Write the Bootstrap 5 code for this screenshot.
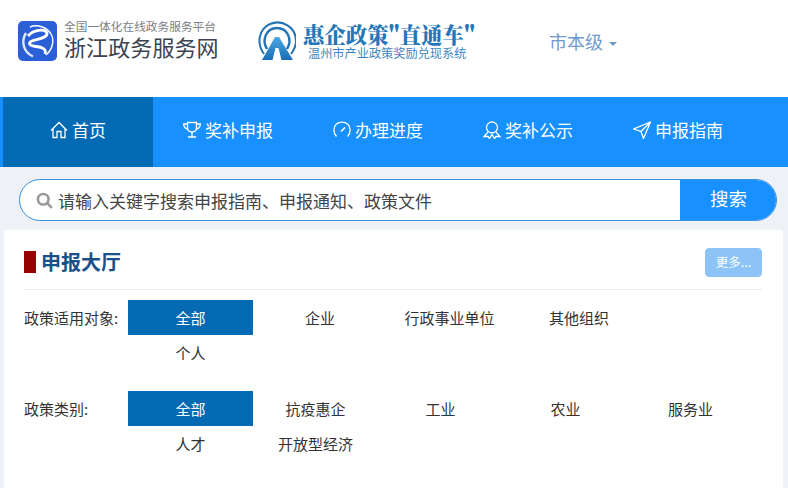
<!DOCTYPE html>
<html lang="zh-CN">
<head>
<meta charset="utf-8">
<title>浙江政务服务网</title>
<link href="https://cdn.jsdelivr.net/npm/bootstrap@5.3.0/dist/css/bootstrap.min.css" rel="stylesheet">
<style>
html,body{height:488px;overflow:hidden}
body{background:#eef1f6;font-family:"Noto Sans CJK SC","Liberation Sans",sans-serif;color:#333}
.top-head{height:97px;background:#fff;padding-left:18px}
.brand-one{width:209px;gap:7px;margin-top:21px}
.brand-mark{width:39px;height:40px;flex:none}
.brand-sub{font-size:11.7px;line-height:12px;color:#7b8087;white-space:nowrap;margin-top:-1px}
.brand-main{font-size:22px;letter-spacing:.1px;line-height:28px;color:#3b4450;white-space:nowrap}
.brand-two{margin-left:31px;margin-top:21px;gap:7px;width:217px}
.brand-arcs{width:38px;height:39px;flex:none}
.two-main{font-family:"Noto Serif CJK SC","Noto Sans CJK SC",sans-serif;font-size:21.4px;font-weight:900;line-height:22px;color:#2577b9;white-space:nowrap;margin-top:2px}
.two-sub{font-size:12.2px;line-height:14px;color:#3f87c0;white-space:nowrap;margin-left:5px;margin-top:1px}
.level-pick{margin-left:74px;margin-top:29px;font-size:18px;line-height:24px;color:#6d9acb;height:24px}
.level-pick::after{content:"";display:inline-block;margin-left:6px;vertical-align:3px;border-top:4px solid #6d9acb;border-left:4px solid transparent;border-right:4px solid transparent}
.main-nav{height:70px;background:#1890ff;padding-left:3px}
.main-nav a{width:150px;height:70px;color:#fff;font-size:17px;text-decoration:none;gap:4px;padding-bottom:5px}
.main-nav a.on{background:#036ab3}
.main-nav svg{width:18px;height:18px;flex:none}
.search-wrap{height:63px;padding:12px 11px 0 19px}
.search-box{height:42px;background:#fff;border:1px solid #3c90dc;border-radius:21px;overflow:hidden}
.search-glass{width:17px;height:17px;margin-left:16px;flex:none}
.search-box .form-control{border:0;box-shadow:none;background:transparent;font-size:17px;color:#444;padding:0 0 0 5px;height:40px}
.search-box .form-control::placeholder{color:#444;opacity:1}
.search-box .btn{width:97px;height:42px;margin:-1px;background:#1890ff;border:0;border-radius:0;color:#fff;font-size:18.500px;padding:0 0 2px}
.hall{margin:0 5px 0 4px;height:258px;background:#fff;padding:18px 21px 0 20px}
.hall-top{height:42px;border-bottom:1px solid #e9ecef}
.hall-top h2{margin:0;font-size:20px;line-height:28px;font-weight:700;color:#1a4f8b;gap:5px}
.hall-top h2::before{content:"";width:12px;height:22px;background:#990000}
.more-btn{width:57px;height:29px;padding:0;font-size:12.500px;background:#8cc4f8;border:1px solid #8cc4f8;border-radius:4px;color:#fff}
.pick-row{margin-top:10px}
.pick-row + .pick-row{margin-top:21px}
.pick-name{width:104px;flex:none;font-size:15px;line-height:35px;color:#333;white-space:nowrap}
.pick-list{column-gap:4.500px;flex:1}
.pick-list.tight{column-gap:0}
.pick-list a{width:125px;height:35px;line-height:35px;text-align:center;font-size:15px;color:#333;text-decoration:none}
.pick-list a.on{background:#036ab3;color:#fff}
</style>
</head>
<body>
<header class="top-head d-flex align-items-start">
  <div class="brand-one d-flex">
    <svg class="brand-mark" viewBox="0 0 39 40"><rect width="39" height="40" rx="5" fill="#2b5fd8"/><path d="M12 6C19 3 29 6 33 13C37 20 34 29 28 34" fill="none" stroke="#fff" stroke-width="1.400"/><path d="M8 12C3 20 5 31 15 35.500" fill="none" stroke="#dfe8ff" stroke-width="2.400"/><path d="M10 15C15 9 27 7 29 12C30 17 20 18 14 20C9 22 12 25 18 25.500C24 26 29 28 27 33" fill="none" stroke="#fff" stroke-width="2.800"/></svg>
    <div>
      <div class="brand-sub">全国一体化在线政务服务平台</div>
      <div class="brand-main">浙江政务服务网</div>
    </div>
  </div>
  <div class="brand-two d-flex">
    <svg class="brand-arcs" viewBox="0 0 38 39"><defs><linearGradient id="mt" x1="0" y1="0" x2="0" y2="1"><stop offset="0" stop-color="#4aa8e4"/><stop offset="1" stop-color="#1a6db5"/></linearGradient></defs><path d="M6 33C-2 22 1 8 12 3C24-2 38 6 38 20C38 25 36 29 33 33" fill="none" stroke="#2474b5" stroke-width="2"/><path d="M9 28C3 18 9 7 19 7C29 7 35 18 29 28" fill="none" stroke="#2474b5" stroke-width="2.400"/><path d="M4 39L17 16H21L35 39H23.500L20.500 27H17.500L14.500 39Z" fill="url(#mt)"/></svg>
    <div>
      <div class="two-main">惠企政策"直通车"</div>
      <div class="two-sub">温州市产业政策奖励兑现系统</div>
    </div>
  </div>
  <a class="level-pick text-decoration-none" href="#">市本级</a>
</header>

<nav class="main-nav d-flex">
  <a class="on d-flex align-items-center justify-content-center" href="#"><svg viewBox="0 0 18 18" fill="none" stroke="#fff" stroke-width="1.300"><path d="M1 9.500L9 1.500L17 9.500M3 7.500V16.500H7V10.500H11V16.500H15V7.500"/></svg>首页</a>
  <a class="d-flex align-items-center justify-content-center" href="#"><svg viewBox="0 0 18 18" fill="none" stroke="#fff" stroke-width="1.300"><path d="M4.500 1.500H13.500V6.500C13.500 9.500 11.500 11 9 11C6.500 11 4.500 9.500 4.500 6.500ZM4.500 3H.7C.7 6 2.500 7.800 5 8.200M13.500 3H17.300C17.300 6 15.500 7.800 13 8.200M9 11V15.500M5 16H13" /></svg>奖补申报</a>
  <a class="d-flex align-items-center justify-content-center" href="#"><svg viewBox="0 0 18 18" fill="none" stroke="#fff" stroke-width="1.300"><path d="M3.500 15.500C0 12 0 6 3.500 3C6.500 .5 11.500 .5 14.500 3C18 6 18 12 14.500 15.500"/><path d="M8 10.500L12 6.500" stroke-width="1.600"/></svg>办理进度</a>
  <a class="d-flex align-items-center justify-content-center" href="#"><svg viewBox="0 0 18 18" fill="none" stroke="#fff" stroke-width="1.300"><circle cx="9" cy="6.500" r="5.500"/><path d="M5 11L1 15.500L5 15.500L6.500 17.500L9 13.500L11.500 17.500L13 15.500L17 15.500L13 11"/></svg>奖补公示</a>
  <a class="d-flex align-items-center justify-content-center" href="#"><svg viewBox="0 0 18 18" fill="none" stroke="#fff" stroke-width="1.300"><path d="M17.500 1L.7 8L8 10.500L10.500 17.500ZM17.500 1L8 10.500"/></svg>申报指南</a>
</nav>

<div class="search-wrap">
  <form class="search-box d-flex align-items-center">
    <svg class="search-glass" viewBox="0 0 16 16" fill="none" stroke="#999" stroke-width="2.400"><circle cx="6.800" cy="6.800" r="5"/><path d="M10.500 10.500L15 15"/></svg>
    <input class="form-control" type="text" placeholder="请输入关键字搜索申报指南、申报通知、政策文件">
    <button class="btn flex-shrink-0" type="button">搜索</button>
  </form>
</div>

<main class="hall">
  <div class="hall-top d-flex justify-content-between align-items-start">
    <h2 class="d-flex align-items-center">申报大厅</h2>
    <button class="btn more-btn" type="button">更多...</button>
  </div>
  <div class="pick-row d-flex">
    <div class="pick-name">政策适用对象:</div>
    <div class="pick-list d-flex flex-wrap">
      <a class="on" href="#">全部</a><a href="#">企业</a><a href="#">行政事业单位</a><a href="#">其他组织</a><a href="#">个人</a>
    </div>
  </div>
  <div class="pick-row d-flex">
    <div class="pick-name">政策类别:</div>
    <div class="pick-list tight d-flex flex-wrap">
      <a class="on" href="#">全部</a><a href="#">抗疫惠企</a><a href="#">工业</a><a href="#">农业</a><a href="#">服务业</a><a href="#">人才</a><a href="#">开放型经济</a>
    </div>
  </div>
</main>
<script src="https://cdn.jsdelivr.net/npm/bootstrap@5.3.0/dist/js/bootstrap.bundle.min.js"></script>
</body>
</html>
